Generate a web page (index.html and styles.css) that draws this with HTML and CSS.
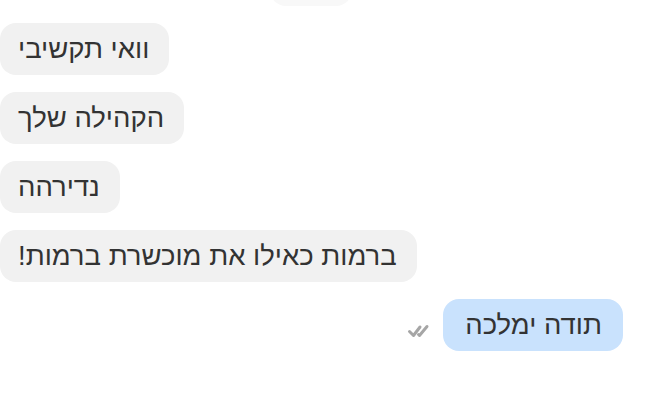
FILE: index.html
```html
<!DOCTYPE html>
<html lang="he">
<head>
    <meta charset="UTF-8">
    <title>Chat</title>
    <link rel="stylesheet" href="styles.css">
</head>
<body>
    <div class="chat">
        <div class="msg in faded"><span class="bubble">&nbsp;</span></div>
        <div class="msg in"><span class="bubble">וואי תקשיבי</span></div>
        <div class="msg in"><span class="bubble">הקהילה שלך</span></div>
        <div class="msg in"><span class="bubble">נדירהה</span></div>
        <div class="msg in"><span class="bubble">ברמות כאילו את מוכשרת ברמות!</span></div>
        <div class="msg out">
            <svg class="ticks" width="24" height="14" viewBox="0 0 24 14">
                <path d="M2.5 7.5 L6.5 11.5 L13 3" />
                <path d="M11.5 10.5 L12.5 11.5 L20 2.5" />
            </svg>
            <span class="bubble">תודה ימלכה</span>
        </div>
    </div>
</body>
</html>
```

FILE: styles.css
```css
body {
    margin: 0;
    background: #ffffff;
    font-family: 'Liberation Sans', 'DejaVu Sans', sans-serif;
}

.chat {
    display: flex;
    flex-direction: column;
    gap: 17px;
    padding: 0 26px 0 0;
    margin-top: -46px;
}

.msg {
    display: flex;
    align-items: center;
}

.msg.in {
    justify-content: flex-start;
}

.msg.out {
    justify-content: flex-end;
    gap: 12px;
}

.bubble {
    direction: rtl;
    font-size: 27.5px;
    line-height: 28px;
    color: #333333;
    background: #f1f1f1;
    border-radius: 16px;
    padding: 12px 20px 12px 18px;
}

.faded {
    padding-left: 270px;
}

.faded .bubble {
    background: #f8f8f8;
    width: 44px;
}

.out .bubble {
    background: #c9e2fd;
    padding: 12px 21px 12px 22px;
}

.ticks {
    margin-top: 12px;
}

.ticks path {
    fill: none;
    stroke: #a6a6a6;
    stroke-width: 3;
    stroke-linecap: round;
    stroke-linejoin: round;
}
```
